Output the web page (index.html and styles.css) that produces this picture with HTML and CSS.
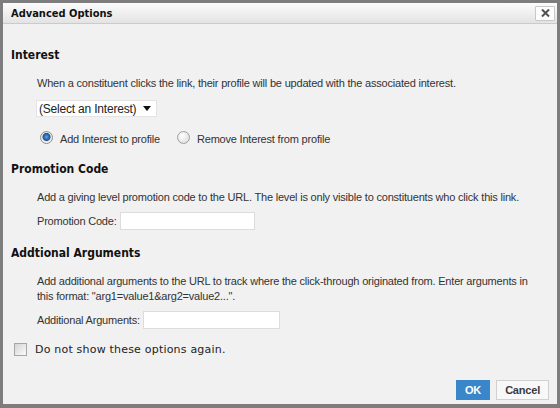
FILE: index.html
```html
<!DOCTYPE html>
<html lang="en">
  <head>
    <meta charset="UTF-8" />
    <title>Advanced Options</title>
    <link rel="stylesheet" href="styles.css">
  </head>
  <body>
    <div class="dialog">
      <div class="titlebar">
        <span class="title">Advanced Options</span>
        <button class="close" title="Close">
          <svg width="9" height="8" viewBox="0 0 9 8">
            <path d="M1 0.5 L8 7.5 M8 0.5 L1 7.5" stroke="#505050" stroke-width="2" />
          </svg>
        </button>
      </div>

      <div class="content">
        <h2>Interest</h2>
        <div class="section first">
          <p>When a constituent clicks the link, their profile will be updated with the associated interest.</p>
          <div class="select"><span>(Select an Interest)</span><span class="caret"></span></div>
          <div class="radios">
            <label class="radio"><span class="dot checked"></span>Add Interest to profile</label>
            <label class="radio"><span class="dot"></span>Remove Interest from profile</label>
          </div>
        </div>

        <h2>Promotion Code</h2>
        <div class="section">
          <p>Add a giving level promotion code to the URL. The level is only visible to constituents who click this link.</p>
          <div class="field">
            <label>Promotion Code:</label>
            <span class="input"></span>
          </div>
        </div>

        <h2>Addtional Arguments</h2>
        <div class="section">
          <p>Add additional arguments to the URL to track where the click-through originated from. Enter arguments in this format: "arg1=value1&amp;arg2=value2...".</p>
          <div class="field">
            <label>Additional Arguments:</label>
            <span class="input wide"></span>
          </div>
        </div>

        <label class="dontshow"><span class="box"></span>Do not show these options again.</label>
      </div>

      <div class="buttons">
        <button class="btn ok">OK</button>
        <button class="btn">Cancel</button>
      </div>
    </div>
  </body>
</html>
```

FILE: styles.css
```css
html, body {
  margin: 0;
  height: 100%;
}

body {
  font-family: 'Liberation Sans', Arial, sans-serif;
  font-size: 11px;
  letter-spacing: -0.2px;
  color: #333;
  background-color: #7d7d7d;
}

.dialog {
  box-sizing: border-box;
  height: 408px;
  border: 3px solid #7d7d7d;
  border-bottom-width: 4px;
  background-color: #f1f1f1;
  display: flex;
  flex-direction: column;
}

.titlebar {
  flex-shrink: 0;
  box-sizing: border-box;
  height: 21px;
  display: flex;
  align-items: center;
  justify-content: space-between;
  padding: 0 2px 0 8px;
  background: linear-gradient(#fcfcfc, #e3e3e3);
  border-bottom: 1px solid #cbcbcb;
}

.title {
  font-family: 'DejaVu Sans Condensed', 'DejaVu Sans', Verdana, sans-serif;
  font-weight: bold;
  font-size: 11px;
  letter-spacing: 0;
  color: #111;
}

.close {
  width: 20px;
  height: 15px;
  padding: 0;
  display: flex;
  align-items: center;
  justify-content: center;
  background-color: #fdfdfd;
  border: 1px solid #c8c8c8;
  border-radius: 1px;
}

.content {
  flex-shrink: 0;
  padding: 23px 8px 0 8px;
}

h2 {
  margin: 0 0 13px 0;
  line-height: 16px;
  font-family: 'DejaVu Sans Condensed', 'DejaVu Sans', Verdana, sans-serif;
  font-size: 12px;
  font-weight: bold;
  letter-spacing: 0;
  color: #111;
}

.section {
  padding-left: 26px;
  margin-bottom: 15px;
}

.section.first {
  margin-bottom: 14px;
}

p {
  margin: 0;
  line-height: 15px;
  padding-right: 9px;
}

.select {
  display: flex;
  align-items: center;
  box-sizing: border-box;
  height: 17px;
  width: 121px;
  margin: 9px 0 0 -1px;
  padding: 0 2px;
  white-space: nowrap;
  font-size: 12px;
  letter-spacing: -0.2px;
  color: #222;
  background-color: #fff;
  border: 1px solid #e4e4e4;
}

.caret {
  flex-shrink: 0;
  margin-left: 7px;
  width: 0;
  height: 0;
  border-left: 4px solid transparent;
  border-right: 4px solid transparent;
  border-top: 5px solid #111;
}

.radios {
  display: flex;
  gap: 17px;
  height: 16px;
  margin: 14px 0 0 3px;
}

.radio {
  display: flex;
  align-items: center;
  gap: 7px;
}

.dot {
  box-sizing: border-box;
  width: 13px;
  height: 13px;
  margin-top: -3px;
  border-radius: 50%;
  border: 1px solid #a0a0a0;
  background: radial-gradient(circle at 40% 35%, #fff, #d6d6d6);
}

.dot.checked {
  background: radial-gradient(circle at 50% 45%, #5aa2e6 0, #1d5fae 3px, #2a4f80 3.6px, #e2e2e2 4.4px, #fafafa 6px);
  border-color: #8c8c8c;
}

.field {
  display: flex;
  align-items: center;
  gap: 3px;
  margin-top: 7px;
}

.input {
  box-sizing: border-box;
  width: 135px;
  height: 18px;
  background-color: #fff;
  border: 1px solid #dcdcdc;
}

.input.wide {
  width: 137px;
}

.dontshow {
  display: flex;
  align-items: center;
  gap: 8px;
  height: 16px;
  margin: -3px 0 0 3px;
  font-family: 'DejaVu Sans', Verdana, sans-serif;
  font-size: 11px;
  letter-spacing: 0.2px;
  color: #222;
}

.box {
  box-sizing: border-box;
  width: 13px;
  height: 13px;
  border: 1px solid #a6a6a6;
  background: linear-gradient(135deg, #d4d4d4, #fbfbfb);
}

.buttons {
  margin-top: auto;
  display: flex;
  justify-content: flex-end;
  gap: 6px;
  padding: 0 8px 4px 0;
}

.btn {
  box-sizing: border-box;
  height: 20px;
  padding: 0 8px;
  font-family: 'Liberation Sans', Arial, sans-serif;
  font-size: 11px;
  font-weight: bold;
  letter-spacing: -0.2px;
  color: #3a3a3a;
  background-color: #f8f8f8;
  border: 1px solid #d0d0d0;
}

.btn.ok {
  color: #fff;
  background-color: #3a86cb;
  border-color: #3a86cb;
}
```
